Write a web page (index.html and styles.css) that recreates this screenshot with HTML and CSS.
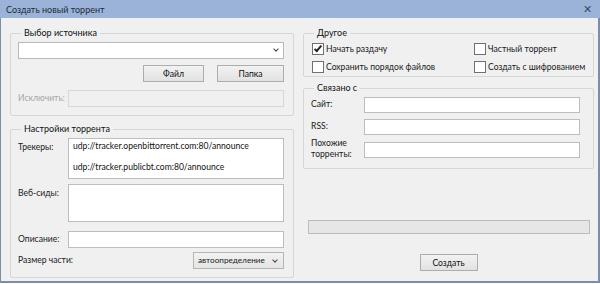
FILE: index.html
```html
<!DOCTYPE html>
<html lang="ru">
<head>
    <meta charset="UTF-8" />
    <title>Создать новый торрент</title>
    <link rel="stylesheet" href="styles.css">
</head>
<body>
    <div class="window">
        <div class="titlebar">
            <span class="title">Создать новый торрент</span>
            <span class="close">&#x2715;</span>
        </div>
        <div class="content">
            <div class="col left">
                <fieldset class="group source">
                    <legend>Выбор источника</legend>
                    <div class="combo"><span class="arrow"></span></div>
                    <div class="buttons">
                        <button class="btn btn-file">Файл</button>
                        <button class="btn btn-folder">Папка</button>
                    </div>
                    <div class="row exclude">
                        <label class="disabled">Исключить:</label>
                        <input type="text" disabled>
                    </div>
                </fieldset>

                <fieldset class="group settings">
                    <legend>Настройки торрента</legend>
                    <div class="row">
                        <label>Трекеры:</label>
                        <div class="area trackers">
                            <div>udp://tracker.openbittorrent.com:80/announce</div>
                            <div class="blank"></div>
                            <div>udp://tracker.publicbt.com:80/announce</div>
                        </div>
                    </div>
                    <div class="row seeds-row">
                        <label>Веб-сиды:</label>
                        <div class="area seeds"></div>
                    </div>
                    <div class="row desc">
                        <label>Описание:</label>
                        <input type="text">
                    </div>
                    <div class="row piece">
                        <label>Размер части:</label>
                        <div class="select">автоопределение<span class="arrow"></span></div>
                    </div>
                </fieldset>
            </div>

            <div class="col right">
                <fieldset class="group other">
                    <legend>Другое</legend>
                    <div class="checks">
                        <div class="check"><span class="box checked"></span>Начать раздачу</div>
                        <div class="check"><span class="box"></span>Частный торрент</div>
                        <div class="check"><span class="box"></span>Сохранить порядок файлов</div>
                        <div class="check"><span class="box"></span>Создать с шифрованием</div>
                    </div>
                </fieldset>

                <fieldset class="group linked">
                    <legend>Связано с</legend>
                    <div class="row">
                        <label>Сайт:</label>
                        <input type="text">
                    </div>
                    <div class="row">
                        <label>RSS:</label>
                        <input type="text">
                    </div>
                    <div class="row similar">
                        <label>Похожие торренты:</label>
                        <input type="text">
                    </div>
                </fieldset>

                <div class="progress"></div>
                <div class="actions">
                    <button class="btn btn-create">Создать</button>
                </div>
            </div>
        </div>
    </div>
</body>
</html>
```

FILE: styles.css
```css
body {
    margin: 0;
    padding: 0;
    background-color: #ffffff;
    font-family: Lato, "Noto Sans", Arial, sans-serif;
    font-size: 8.6px;
    color: #1a1a1a;
}
.window {
    width: 600px;
    height: 283px;
    box-sizing: border-box;
    background-color: #f0f0f0;
    border: 1px solid #7c8da8;
    border-top: none;
    border-right-width: 2px;
    border-bottom-width: 2px;
}
.titlebar {
    height: 18px;
    background-color: #9bb3d8;
    display: flex;
    justify-content: space-between;
    align-items: center;
    padding: 0 8px 0 6px;
    margin-left: -1px;
    margin-right: -2px;
}
.titlebar .title {
    color: #1e2a3a;
    font-size: 9px;
}
.titlebar .close {
    color: #3b4b63;
    font-size: 11px;
}
.content {
    display: flex;
    gap: 9px;
    padding: 8px 0 0 9px;
}
.col {
    display: flex;
    flex-direction: column;
}
.col.left {
    width: 284px;
}
.col.right {
    width: 291px;
}
.group {
    margin: 0;
    border: 1px solid #d6d6d6;
    border-radius: 2px;
    padding: 2px 9px 8px 7px;
    min-width: 0;
}
.group legend {
    padding: 0 3px;
    margin-left: 3px;
    line-height: 14px;
    font-size: 9px;
    color: #111;
}
.combo {
    height: 17px;
    box-sizing: border-box;
    background: white;
    border: 1px solid #b9b9b9;
    position: relative;
}
.arrow {
    position: absolute;
    right: 5px;
    top: 4px;
    width: 3px;
    height: 3px;
    border-right: 1px solid #444;
    border-bottom: 1px solid #444;
    transform: rotate(45deg);
}
.buttons {
    display: flex;
    justify-content: flex-end;
    gap: 13px;
    margin-top: 6px;
}
.btn {
    font-family: inherit;
    font-size: 8.6px;
    height: 17px;
    padding: 0;
    background: linear-gradient(#f2f2f2, #e2e2e2);
    border: 1px solid #adadad;
    color: #111;
}
.btn-file { width: 61px; }
.btn-folder { width: 67px; }
.row {
    display: flex;
    align-items: flex-start;
}
.row label {
    width: 50px;
    flex: none;
    padding-top: 3px;
    line-height: 11px;
}
.row input, .area {
    flex: 1;
    min-width: 0;
    box-sizing: border-box;
    height: 17px;
    border: 1px solid #bdbdbd;
    background: white;
    margin: 0;
    padding: 0;
    font-family: inherit;
}
.exclude {
    margin-top: 8px;
}
.exclude label.disabled {
    color: #a6a6a6;
}
.exclude input {
    background: #f0f0f0;
    border-color: #d7d7d7;
}
.settings {
    margin-top: 6px;
    padding-bottom: 8px;
}
.settings .row label {
    padding-top: 4px;
}
.area.trackers {
    height: 41px;
    padding: 2px 4px;
    line-height: 11px;
    color: #111;
}
.area.trackers .blank {
    height: 10px;
}
.area.seeds {
    height: 38px;
}
.seeds-row { margin-top: 5px; }
.desc { margin-top: 9px; }
.settings .desc label { padding-top: 3px; }
.piece {
    margin-top: 4px;
    justify-content: space-between;
}
.settings .piece label { width: auto; padding-top: 3px; }
.select {
    width: 91px;
    height: 17px;
    box-sizing: border-box;
    border: 1px solid #b5b5b5;
    background: linear-gradient(#f2f2f2, #e5e5e5);
    padding-left: 4px;
    font-size: 8.2px;
    line-height: 15px;
    position: relative;
}
.select .arrow { top: 5px; right: 6px; }
.checks {
    display: grid;
    grid-template-columns: 162px 1fr;
    row-gap: 5px;
    padding-left: 1px;
}
.other {
    padding-bottom: 3px;
    padding-right: 4px;
}
.check {
    display: flex;
    align-items: center;
    height: 13px;
    white-space: nowrap;
}
.box {
    width: 10px;
    height: 10px;
    border: 1px solid #707070;
    background: white;
    margin-right: 2px;
    position: relative;
    flex: none;
}
.box.checked::after {
    content: "";
    position: absolute;
    left: 3px;
    top: 0;
    width: 2px;
    height: 6px;
    border-right: 2px solid #222;
    border-bottom: 2px solid #222;
    transform: rotate(40deg);
}
.linked {
    margin-top: 4px;
    padding-right: 13px;
}
.linked .row { margin-top: 6px; }
.linked .row:first-of-type { margin-top: 0; }
.linked .row label {
    width: 53px;
    padding-top: 2px;
}
.linked input { height: 16px; }
.linked .similar label {
    line-height: 11px;
    padding-top: 0;
    margin-top: -4px;
}
.linked .similar { margin-top: 7px; }
.progress {
    margin: 51px 4px 0 5px;
    height: 14px;
    background: #e6e6e6;
    border: 1px solid #bcbcbc;
    box-sizing: border-box;
}
.actions {
    display: flex;
    justify-content: center;
    margin-top: 20px;
}
.btn-create {
    width: 58px;
}
```
